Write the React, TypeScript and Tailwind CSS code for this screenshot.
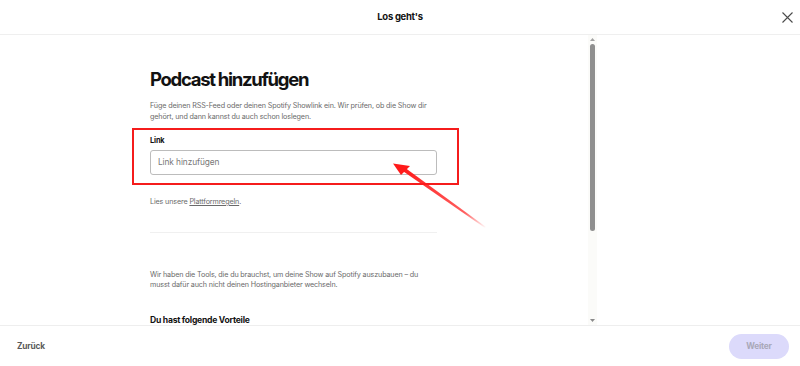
import React from 'react'

const font = { fontFamily: 'Inter, "Noto Sans", sans-serif' }

function CloseIcon() {
  return (
    <svg className="w-[11px] h-[11px]" viewBox="0 0 11 11" fill="none" stroke="#4b4b4b" strokeWidth={1.1}>
      <path d="M0.5 0.5l10 10M10.5 0.5l-10 10" />
    </svg>
  )
}

function Scrollbar() {
  return (
    <div className="w-[9px] h-full flex flex-col items-center bg-[#fbfbf9]">
      <div className="h-[3px]" />
      <svg className="w-[5px] h-[3px]" viewBox="0 0 5 3"><path d="M2.5 0L5 3H0z" fill="#a3a3a3" /></svg>
      <div className="h-[3px]" />
      <div className="w-[5px] h-[187px] rounded-full bg-[#8f8f8f]" />
      <div className="flex-1" />
      <svg className="w-[5px] h-[3px]" viewBox="0 0 5 3"><path d="M0 0H5L2.5 3z" fill="#8a8a8a" /></svg>
      <div className="h-[3px]" />
    </div>
  )
}

// red annotation arrow pointing at the input
function Arrow() {
  return (
    <svg className="absolute left-[380px] top-[155px] w-[115px] h-[80px] pointer-events-none" viewBox="0 0 115 80">
      <defs>
        <linearGradient id="fade" x1="1" y1="1" x2="0" y2="0">
          <stop offset="0" stopColor="#ff1a1a" stopOpacity="0" />
          <stop offset="0.25" stopColor="#ff1a1a" stopOpacity="0.7" />
          <stop offset="1" stopColor="#ff1a1a" stopOpacity="1" />
        </linearGradient>
      </defs>
      <polygon points="105,73 22,15.5 24,12 106,72" fill="url(#fade)" />
      <polygon points="13,8.5 30,11 21,20" fill="#ff1a1a" />
    </svg>
  )
}

export default function App() {
  return (
    <div className="relative w-[800px] h-[366px] bg-white flex flex-col overflow-hidden text-[#121212]" style={font}>
      {/* Header */}
      <div className="h-[35px] shrink-0 border-b border-[#efefef] flex items-center justify-center relative">
        <span className="text-[9.5px] font-bold tracking-[-0.03em]">Los geht's</span>
        <button className="absolute right-[7px] top-[12px]">
          <CloseIcon />
        </button>
      </div>

      {/* Body */}
      <div className="flex-1 flex min-h-0">
        <div className="w-[588px] overflow-hidden">
          <div className="ml-[150px] w-[287px] pt-[32px]">
            <h1 className="text-[18.5px] leading-[24px] font-bold tracking-[-0.07em]">Podcast hinzufügen</h1>
            <p className="mt-[10px] text-[7.2px] leading-[10.5px] text-[#6a6a6a] tracking-[-0.02em]">
              Füge deinen RSS-Feed oder deinen Spotify Showlink ein. Wir prüfen, ob die Show dir gehört, und dann kannst du auch schon loslegen.
            </p>
            <div className="relative mt-[14px]">
              <div className="absolute -left-[18px] -top-[8px] w-[327px] h-[57px] border-2 border-[#f51c1c] pointer-events-none" />
              <label className="block text-[7.4px] leading-[10px] font-bold tracking-[-0.02em]">Link</label>
              <div className="mt-[4px] h-[25px] border border-[#bcbcbc] rounded-[3px] flex items-center px-[7px]">
                <span className="text-[8.3px] text-[#777] tracking-[-0.01em]">Link hinzufügen</span>
              </div>
            </div>
            <p className="mt-[22px] text-[7.2px] leading-[10px] text-[#6a6a6a] tracking-[-0.02em]">
              Lies unsere <span className="underline">Plattformregeln</span>.
            </p>
            <div className="mt-[25px] h-px bg-[#f0f0f0]" />
            <p className="mt-[37px] text-[7.2px] leading-[10px] text-[#6a6a6a] tracking-[-0.02em]">
              Wir haben die Tools, die du brauchst, um deine Show auf Spotify auszubauen – du musst dafür auch nicht deinen Hostinganbieter wechseln.
            </p>
            <h2 className="mt-[25px] text-[8.6px] leading-[10px] font-bold tracking-[-0.03em]">Du hast folgende Vorteile</h2>
          </div>
        </div>
        <Scrollbar />
        <div className="flex-1" />
      </div>

      {/* Footer */}
      <div className="h-[41px] shrink-0 border-t border-[#eeeeee] flex items-center justify-between pl-[17px] pr-[11px]">
        <span className="text-[8.3px] font-bold text-[#5a5a5a] tracking-[-0.02em]">Zurück</span>
        <button className="w-[60px] h-[25px] rounded-full bg-[#dcdafb] text-[8.3px] font-bold text-[#a9a8b8] tracking-[-0.02em]">Weiter</button>
      </div>

      <Arrow />
    </div>
  )
}
